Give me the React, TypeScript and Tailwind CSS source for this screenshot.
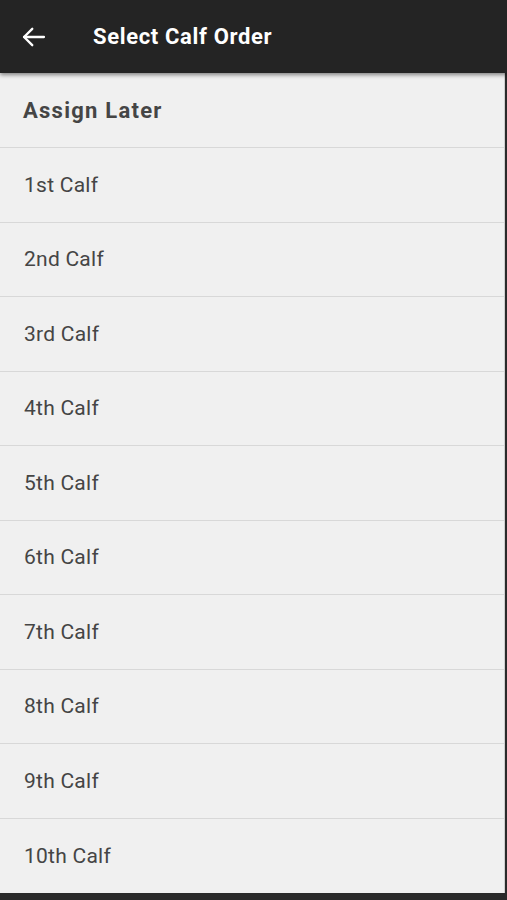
import React from "react";

const orders = [
  "1st Calf",
  "2nd Calf",
  "3rd Calf",
  "4th Calf",
  "5th Calf",
  "6th Calf",
  "7th Calf",
  "8th Calf",
  "9th Calf",
  "10th Calf",
];

const App = () => {
  return (
    <div
      className="flex flex-col h-[900px] w-[507px] bg-[#2a2a2a] overflow-hidden"
      style={{ fontFamily: "Roboto, 'Noto Sans', sans-serif" }}
    >
      {/* Top bar */}
      <div className="relative z-10 h-[73px] shrink-0 bg-[#242424] flex items-center shadow-[0_2px_4px_rgba(0,0,0,0.45)]">
        <button className="w-[68px] h-full flex items-center justify-center">
          <svg
            width="28"
            height="28"
            viewBox="0 0 24 24"
            fill="none"
            stroke="white"
            strokeWidth="2"
            strokeLinecap="round"
            strokeLinejoin="round"
          >
            <path d="M20.5 12H3.5" />
            <path d="M10.5 5l-7 7 7 7" />
          </svg>
        </button>
        <h1 className="ml-[25px] text-white text-[22px] font-bold tracking-[0.65px]">
          Select Calf Order
        </h1>
      </div>

      {/* List */}
      <div className="flex flex-col w-[505px] bg-[#f0f0f0] border-r border-[#cfcfcf]">
        <div className="h-[75px] flex items-center pl-[23px] border-b border-[#d8d8d8]">
          <span className="text-[22px] font-bold text-[#454545] tracking-[1.25px]">
            Assign Later
          </span>
        </div>
        {orders.map((order, i) => (
          <div
            key={i}
            className={
              "h-[74.5px] flex items-center pl-[24px] pt-[1px] " +
              (i < orders.length - 1 ? "border-b border-[#d8d8d8]" : "")
            }
          >
            <span className="text-[21px] text-[#454545] tracking-[0.25px]">
              {order}
            </span>
          </div>
        ))}
      </div>
    </div>
  );
};

export default App;
